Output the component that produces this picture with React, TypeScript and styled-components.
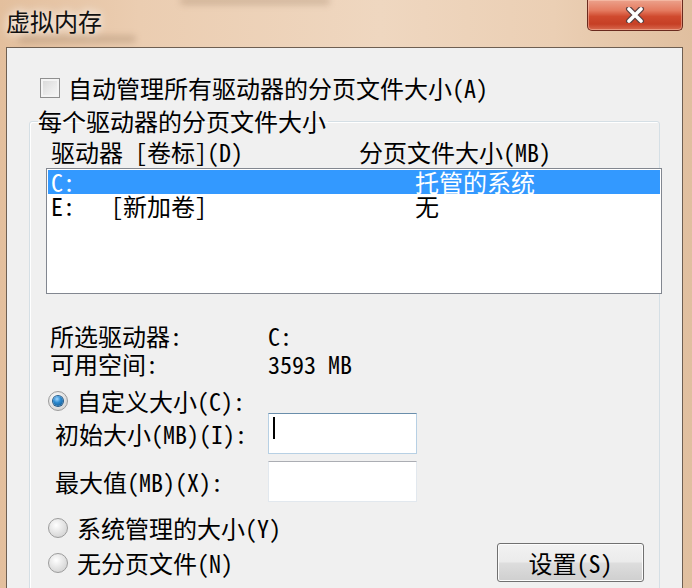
import React from "react";
import styled, { createGlobalStyle } from "styled-components";

const GlobalStyle = createGlobalStyle`
  body {
    margin: 0;
    font-family: "Noto Sans Mono CJK SC", "Noto Sans CJK SC", sans-serif;
  }
`;

const FONT = `"Noto Sans Mono CJK SC", "Noto Sans CJK SC", sans-serif`;

const Screen = styled.div`
  width: 692px;
  height: 588px;
  overflow: hidden;
  display: flex;
  flex-direction: column;
  background: linear-gradient(
    90deg,
    #e3bf9d 0%,
    #ebcdb1 20%,
    #efd7c0 55%,
    #ebcfb4 80%,
    #e0bf9f 100%
  );
  font-family: ${FONT};
  color: #000;
`;

const TitleBar = styled.div`
  position: relative;
  height: 47px;
  flex: none;
  display: flex;
  justify-content: space-between;
  align-items: flex-start;
`;

/* blurred shapes of the window behind the aero glass */
const Smudge = styled.span<{ $left: number; $top: number; $width: number }>`
  position: absolute;
  left: ${({ $left }) => $left}px;
  top: ${({ $top }) => $top}px;
  width: ${({ $width }) => $width}px;
  height: 8px;
  border-radius: 4px;
  background: rgba(120, 85, 60, 0.22);
  filter: blur(3px);
`;

const Title = styled.div`
  position: relative;
  padding: 7px 0 0 6px;
  font-family: "Noto Sans CJK SC", sans-serif;
  font-size: 24px;
  line-height: 28px;
  color: #111;
  text-shadow: 0 0 8px rgba(255, 255, 255, 0.9), 0 0 14px rgba(255, 255, 255, 0.6);
`;

const CloseButton = styled.div`
  position: relative;
  width: 94px;
  height: 30px;
  margin-right: 9px;
  border: 1px solid #6a2a1e;
  border-top: none;
  border-radius: 0 0 5px 5px;
  display: flex;
  align-items: center;
  justify-content: center;
  background: linear-gradient(
    180deg,
    #eca28c 0%,
    #e47a5f 35%,
    #d04a2e 55%,
    #c63f25 80%,
    #d86a4f 100%
  );
  box-shadow: inset 0 0 0 1px rgba(255, 210, 190, 0.45);
`;

const Panel = styled.div`
  flex: 1;
  margin: 0 9px 0 6px;
  background: #f0f0f0;
  border: 1px solid #6e5f52;
  border-bottom: none;
  display: flex;
  flex-direction: column;
  min-height: 0;
`;

const CheckRow = styled.label`
  display: flex;
  align-items: center;
  gap: 8px;
  height: 24px;
  margin: 28px 0 0 33px;
  font-size: 24px;
  line-height: 24px;
`;

const CheckBox = styled.span`
  width: 18px;
  height: 18px;
  border: 1px solid #8f8f8f;
  background: linear-gradient(135deg, #d6d6d6 0%, #ececec 60%, #f7f7f7 100%);
  box-shadow: inset 0 0 0 2px #f4f4f4;
`;

const Group = styled.fieldset`
  margin: 8px 0 0 22px;
  width: 631px;
  box-sizing: border-box;
  padding: 0 0 40px 0;
  border: 1px solid #d5dfe5;
  border-radius: 3px;
  box-shadow: inset 1px 1px 0 #fff;
  min-inline-size: 0;
`;

const Legend = styled.legend`
  margin-left: 8px;
  padding: 0 2px 0 0;
  font-size: 24px;
  line-height: 26px;
`;

const HeaderRow = styled.div`
  display: grid;
  grid-template-columns: 308px auto;
  margin: 5px 0 0 21px;
  height: 26px;
  font-size: 24px;
  line-height: 26px;
`;

const ListBox = styled.div`
  margin: 3px 0 0 16px;
  width: 612px;
  height: 122px;
  border: 1px solid #828790;
  background: #fff;
  padding: 1px;
  box-sizing: content-box;
  flex: none;
`;

const ListRow = styled.div<{ $selected?: boolean }>`
  display: grid;
  grid-template-columns: 364px auto;
  height: 24px;
  padding-left: 3px;
  font-size: 24px;
  line-height: 24px;
  white-space: pre;
  background: ${({ $selected }) => ($selected ? "#3399ff" : "transparent")};
  color: ${({ $selected }) => ($selected ? "#fff" : "#000")};
`;

const InfoGrid = styled.div`
  display: grid;
  grid-template-columns: 218px auto;
  margin: 28px 0 0 20px;
  font-size: 24px;
  line-height: 28px;
  white-space: pre;
`;

const RadioRow = styled.div<{ $height: number }>`
  display: flex;
  align-items: center;
  gap: 9px;
  height: ${({ $height }) => $height}px;
  padding-left: 18px;
  font-size: 24px;
  line-height: 24px;
`;

const Radio = styled.span<{ $checked?: boolean }>`
  width: 18px;
  height: 18px;
  flex: none;
  border-radius: 50%;
  border: 1px solid #9c9c9c;
  background: radial-gradient(circle at 40% 35%, #ffffff 0%, #e6e6e6 45%, #c9c9c9 100%);
  display: flex;
  align-items: center;
  justify-content: center;

  &::after {
    content: "";
    display: ${({ $checked }) => ($checked ? "block" : "none")};
    width: 10px;
    height: 10px;
    border-radius: 50%;
    background: radial-gradient(circle at 40% 30%, #9fd6ff 0%, #2c8ad0 40%, #0d4f86 100%);
    box-shadow: 0 0 0 1px #245b8a;
  }
`;

const SizeRows = styled.div`
  display: flex;
  flex-direction: column;
  gap: 7px;
  margin-top: 1px;
`;

const SizeRow = styled.div`
  display: grid;
  grid-template-columns: 213px 149px;
  align-items: center;
  padding-left: 25px;
  font-size: 24px;
  line-height: 26px;
`;

const TextInput = styled.div<{ $focused?: boolean }>`
  height: 41px;
  box-sizing: border-box;
  background: #fff;
  border: 1px solid ${({ $focused }) => ($focused ? "#b7d0e4" : "#e2e8ee")};
  border-top-color: ${({ $focused }) => ($focused ? "#6a8eab" : "#abadb3")};
  padding: 3px 0 0 4px;
`;

const Caret = styled.span`
  display: block;
  width: 2px;
  height: 22px;
  background: #000;
`;

const Bottom = styled.div`
  display: flex;
  justify-content: space-between;
  align-items: flex-start;
  margin-top: 13px;
  padding-right: 15px;
`;

const RadioStack = styled.div`
  display: flex;
  flex-direction: column;
  gap: 9px;
`;

const PushButton = styled.div`
  margin-top: 28px;
  width: 145px;
  height: 37px;
  border: 1px solid #707070;
  border-radius: 3px;
  display: flex;
  align-items: center;
  justify-content: center;
  font-size: 24px;
  background: linear-gradient(180deg, #f2f2f2 0%, #ebebeb 48%, #dddddd 52%, #cfcfcf 100%);
  box-shadow: inset 0 0 0 1px #fcfcfc;
`;

const CloseGlyph = () => (
  <svg width="20" height="16" viewBox="0 0 20 16">
    <path d="M4 2 L16 14 M16 2 L4 14" stroke="#5a4040" strokeWidth="6" strokeLinecap="round" />
    <path d="M4 2 L16 14 M16 2 L4 14" stroke="#fff" strokeWidth="3.6" strokeLinecap="round" />
  </svg>
);

export default function App() {
  return (
    <>
      <GlobalStyle />
      <Screen>
        <TitleBar>
          <Smudge $left={18} $top={35} $width={118} />
          <Smudge $left={180} $top={-3} $width={150} />
          <Title>虚拟内存</Title>
          <CloseButton>
            <CloseGlyph />
          </CloseButton>
        </TitleBar>
        <Panel>
          <CheckRow>
            <CheckBox />
            自动管理所有驱动器的分页文件大小(A)
          </CheckRow>
          <Group>
            <Legend>每个驱动器的分页文件大小</Legend>
            <HeaderRow>
              <span>驱动器 [卷标](D)</span>
              <span>分页文件大小(MB)</span>
            </HeaderRow>
            <ListBox>
              <ListRow $selected>
                <span>C:</span>
                <span>托管的系统</span>
              </ListRow>
              <ListRow>
                <span>E:   [新加卷]</span>
                <span>无</span>
              </ListRow>
            </ListBox>
            <InfoGrid>
              <span>所选驱动器:</span>
              <span>C:</span>
              <span>可用空间:</span>
              <span>3593 MB</span>
            </InfoGrid>
            <RadioRow $height={23} style={{ marginTop: 11 }}>
              <Radio $checked />
              自定义大小(C):
            </RadioRow>
            <SizeRows>
              <SizeRow>
                <span>初始大小(MB)(I):</span>
                <TextInput $focused>
                  <Caret />
                </TextInput>
              </SizeRow>
              <SizeRow>
                <span>最大值(MB)(X):</span>
                <TextInput />
              </SizeRow>
            </SizeRows>
            <Bottom>
              <RadioStack>
                <RadioRow $height={26}>
                  <Radio />
                  系统管理的大小(Y)
                </RadioRow>
                <RadioRow $height={26}>
                  <Radio />
                  无分页文件(N)
                </RadioRow>
              </RadioStack>
              <PushButton>设置(S)</PushButton>
            </Bottom>
          </Group>
        </Panel>
      </Screen>
    </>
  );
}
